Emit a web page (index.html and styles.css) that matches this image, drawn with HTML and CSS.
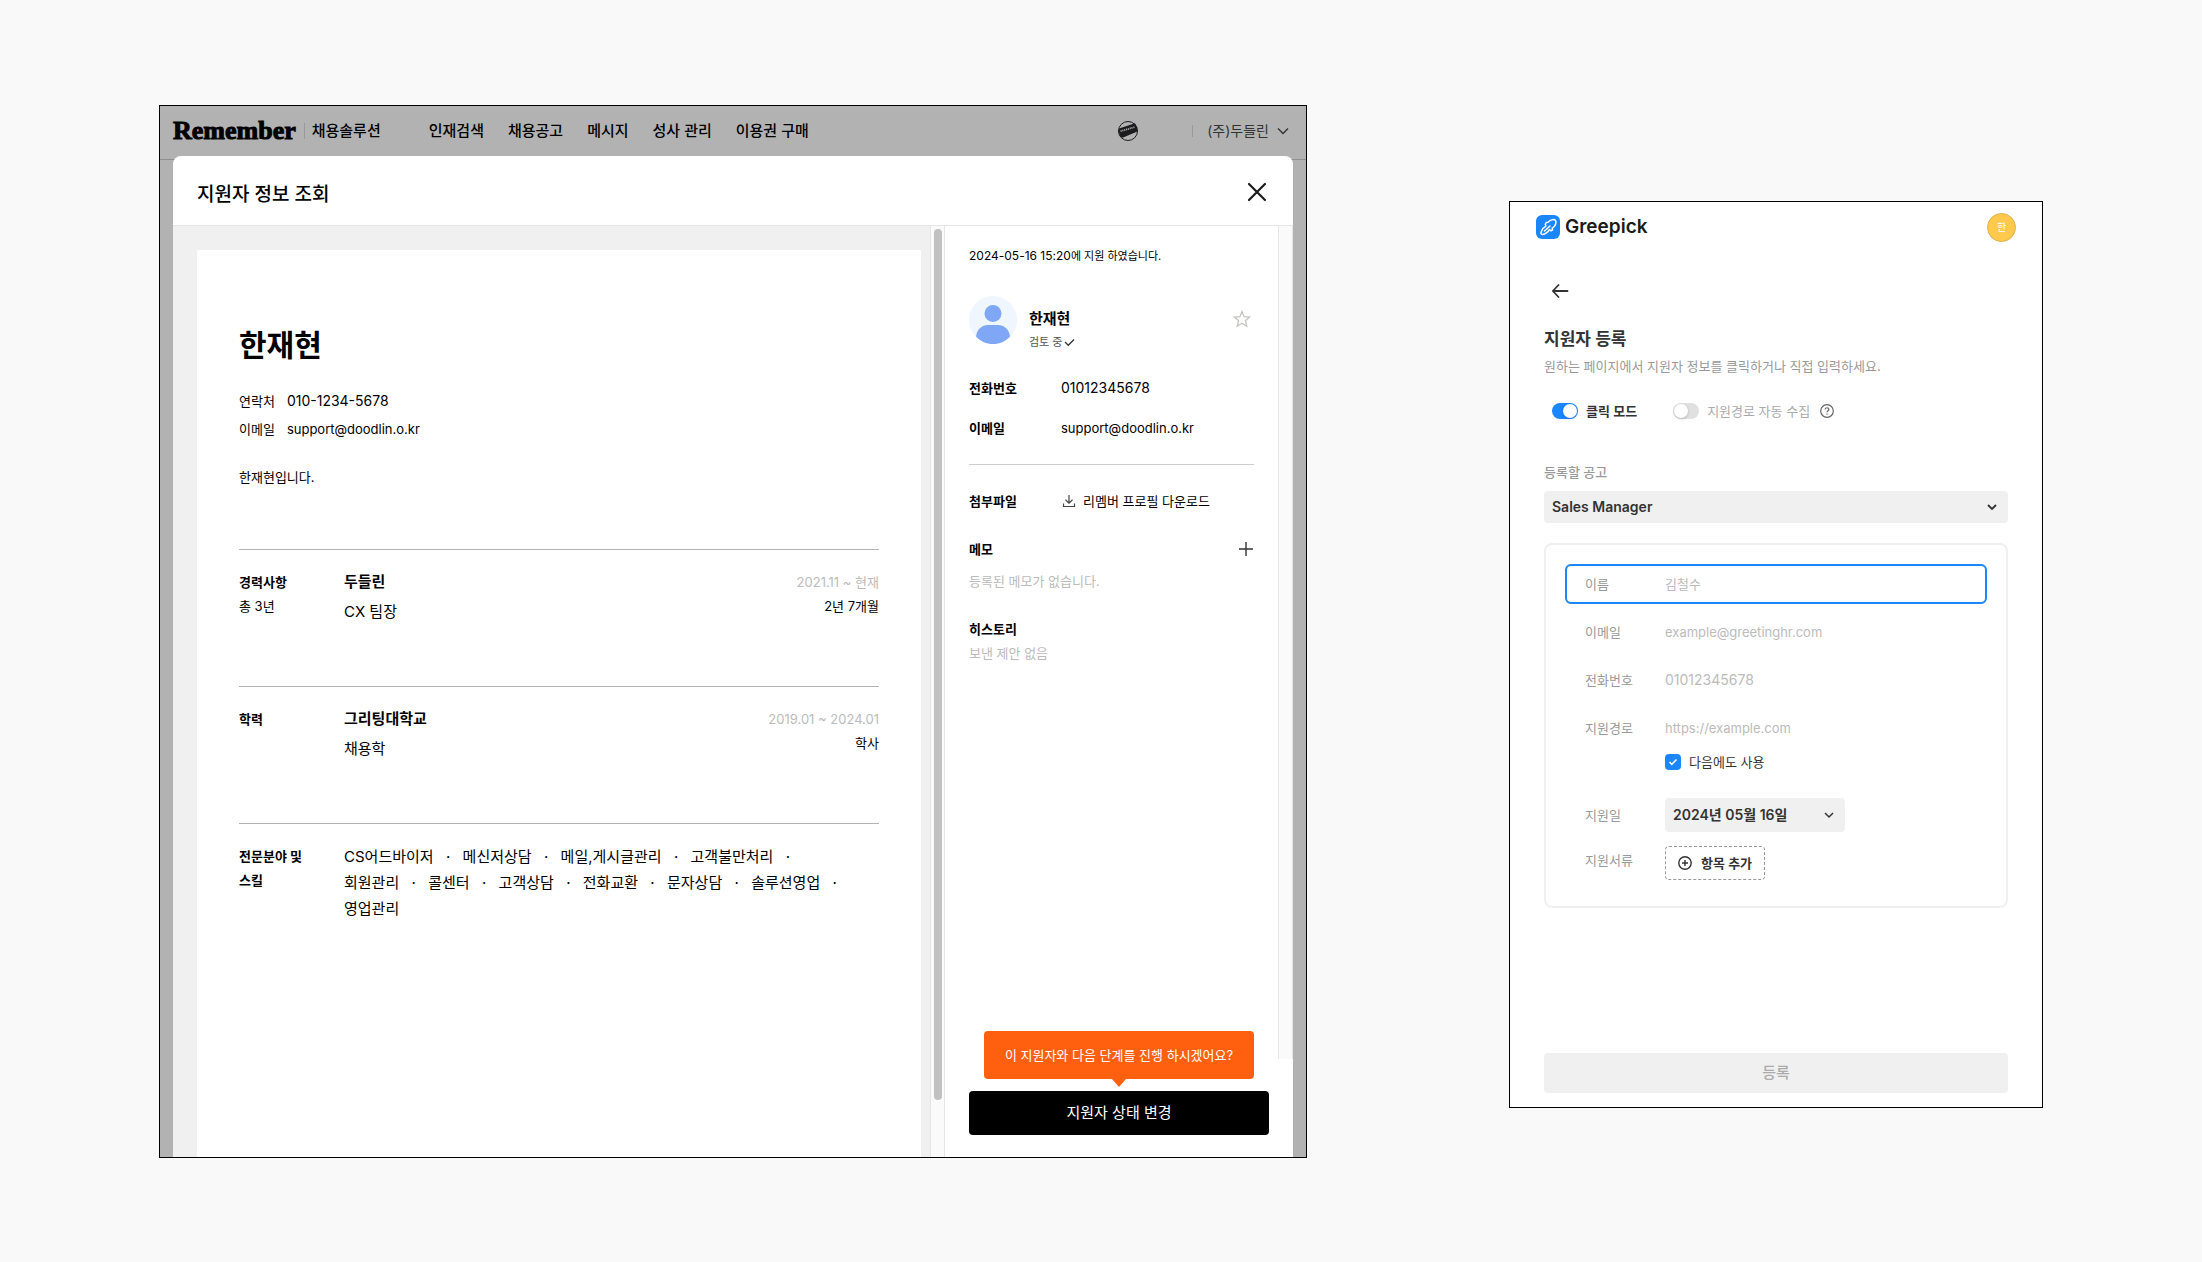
FILE: index.html
```html
<!DOCTYPE html>
<html lang="ko">
<head>
<meta charset="utf-8">
<title>지원자 정보 조회</title>
<link rel="stylesheet" href="styles.css">
</head>
<body>
<main class="stage">
  <section class="window browser">
    <header class="topbar">
      <a class="brand" href="#">Remember</a>
      <span class="brand-sub">채용솔루션</span>
      <nav class="nav">
        <a href="#">인재검색</a>
        <a href="#">채용공고</a>
        <a href="#">메시지</a>
        <a href="#">성사 관리</a>
        <a href="#">이용권 구매</a>
      </nav>
      <svg class="company-logo" width="20" height="20" viewBox="0 0 20 20" aria-hidden="true">
        <circle cx="10" cy="10" r="9.5" fill="none" stroke="#1c1c1e"/>
        <path d="M1 7.500 17 2.200 19 6 19.400 10.500 4.500 16.800 2 15.500 .8 11Z" fill="#1c1c1e"/>
        <path d="M2.500 10.200 17 6" stroke="#a0a0a0" stroke-width="1.800" stroke-dasharray="1.2 .7" fill="none"/>
      </svg>
      <button class="account" type="button">(주)두들린
        <svg width="12" height="8" viewBox="0 0 12 8" fill="none" stroke="#333" stroke-width="1.4" aria-hidden="true"><path d="m1 1.500 5 5 5-5"/></svg>
      </button>
    </header>

    <div class="modal" role="dialog" aria-labelledby="modal-title">
      <header class="modal-head">
        <h1 id="modal-title">지원자 정보 조회</h1>
        <button class="icon-btn" type="button" aria-label="닫기">
          <svg width="20" height="20" viewBox="0 0 20 20" fill="none" stroke="#1a1a1a" stroke-width="2.2" stroke-linecap="round"><path d="m2 2 16 16M18 2 2 18"/></svg>
        </button>
      </header>
      <div class="modal-body">
        <div class="paper-area">
          <article class="paper">
            <h2>한재현</h2>
            <dl class="contact">
              <dt>연락처</dt><dd class="phone">010-1234-5678</dd>
              <dt>이메일</dt><dd>support@doodlin.o.kr</dd>
            </dl>
            <p class="intro">한재현입니다.</p>
            <section class="entry">
              <div class="entry-label"><h3>경력사항</h3><p>총 3년</p></div>
              <div class="entry-main"><h4>두들린</h4><p>CX 팀장</p></div>
              <div class="entry-side"><p class="period">2021.11 ~ 현재</p><p>2년 7개월</p></div>
            </section>
            <section class="entry">
              <div class="entry-label"><h3>학력</h3></div>
              <div class="entry-main"><h4>그리팅대학교</h4><p>채용학</p></div>
              <div class="entry-side"><p class="period">2019.01 ~ 2024.01</p><p>학사</p></div>
            </section>
            <section class="entry">
              <div class="entry-label"><h3>전문분야 및 스킬</h3></div>
              <ul class="skills">
                <li>CS어드바이저</li><li>메신저상담</li><li>메일,게시글관리</li><li>고객불만처리</li><li>회원관리</li><li>콜센터</li><li>고객상담</li><li>전화교환</li><li>문자상담</li><li>솔루션영업</li><li>영업관리</li>
              </ul>
            </section>
          </article>
        </div>
        <div class="scroll-track"><div class="scroll-thumb"></div></div>
        <aside class="side">
          <div class="side-scroll">
            <div class="side-content">
              <p class="applied"><time datetime="2024-05-16T15:20">2024-05-16 15:20</time>에 지원 하였습니다.</p>
              <div class="person">
                <svg width="48" height="48" viewBox="0 0 48 48" aria-hidden="true">
                  <circle cx="24" cy="24" r="24" fill="#f0f6fe"/>
                  <circle cx="24" cy="17.5" r="8.5" fill="#7fa7f5"/>
                  <path d="M7 40.5C8 33 13 29 19 29h10c6 0 11 4 12 11.5C36.500 45.500 30.500 48 24 48S11.500 45.500 7 40.500Z" fill="#7fa7f5"/>
                </svg>
                <div class="person-text">
                  <h3>한재현</h3>
                  <p>검토 중<svg width="11" height="9" viewBox="0 0 11 9" fill="none" stroke="#333" stroke-width="1.3" aria-hidden="true"><path d="m1 4 3.300 3.300L10 1.500"/></svg></p>
                </div>
                <button class="icon-btn star" type="button" aria-label="즐겨찾기">
                  <svg width="18" height="18" viewBox="0 0 18 18" fill="none" stroke="#c4c4bf" stroke-width="1.300"><path d="m9 1.600 2.100 5.100 5.500.4-4.200 3.600 1.300 5.500L9 13.300l-4.700 2.900 1.300-5.500-4.200-3.600 5.500-.4Z"/></svg>
                </button>
              </div>
              <dl class="fields">
                <dt>전화번호</dt><dd class="phone">01012345678</dd>
                <dt>이메일</dt><dd>support@doodlin.o.kr</dd>
              </dl>
              <dl class="fields files">
                <dt>첨부파일</dt>
                <dd><a class="download" href="#"><svg width="14" height="14" viewBox="0 0 14 14" fill="none" stroke="#444" stroke-width="1.200" aria-hidden="true"><path d="M7 1v8M3.500 5.800 7 9.200l3.500-3.400M1.500 9.500v3h11v-3"/></svg>리멤버 프로필 다운로드</a></dd>
              </dl>
              <div class="memo-head">
                <h3>메모</h3>
                <button class="icon-btn" type="button" aria-label="메모 추가"><svg width="16" height="16" viewBox="0 0 16 16" stroke="#333" stroke-width="1.400"><path d="M8 1v14M1 8h14"/></svg></button>
              </div>
              <p class="empty memo">등록된 메모가 없습니다.</p>
              <h3>히스토리</h3>
              <p class="empty">보낸 제안 없음</p>
            </div>
          </div>
          <footer class="side-foot">
            <p class="tip" role="status">이 지원자와 다음 단계를 진행 하시겠어요?</p>
            <button class="primary" type="button">지원자 상태 변경</button>
          </footer>
        </aside>
      </div>
    </div>
  </section>

  <section class="window greepick">
    <header class="gp-head">
      <svg width="24" height="24" viewBox="0 0 24 24" aria-hidden="true">
        <rect width="24" height="24" rx="6" fill="#1a86ff"/>
        <g fill="none" stroke="#fff" stroke-width="1.500" stroke-linejoin="round" stroke-linecap="round">
          <path d="M12 7.200C14 5 17.500 3.800 19.300 5.200c1.500 1.500.3 5.300-2.100 7.300l-1 .7.300 1.700-1.400.9-1.600-1.300c-1.200 2.500-4.500 4.800-7 4.900-1.600 0-1.800-1.200-1.300-2.700.7-2.300 2.700-4.600 4.700-5.600L9.300 9.200l1-1.700Z"/>
          <path d="M14 11 8.500 16"/>
        </g>
      </svg>
      <span class="gp-name">Greepick</span>
      <span class="gp-avatar">한</span>
    </header>
    <form class="gp-form">
      <button class="icon-btn back" type="button" aria-label="뒤로">
        <svg width="18" height="16" viewBox="0 0 18 16" fill="none" stroke="#333" stroke-width="1.800" stroke-linecap="round" stroke-linejoin="round"><path d="M16.500 8H2M7.500 2 1.800 8l5.700 6"/></svg>
      </button>
      <h2>지원자 등록</h2>
      <p class="lead">원하는 페이지에서 지원자 정보를 클릭하거나 직접 입력하세요.</p>
      <div class="toggles">
        <label class="toggle"><input type="checkbox" role="switch" checked>클릭 모드</label>
        <label class="toggle off"><input type="checkbox" role="switch">지원경로 자동 수집</label>
        <svg class="help" width="14" height="14" viewBox="0 0 14 14" fill="none" stroke="#666" stroke-width="1.200" aria-hidden="true"><circle cx="7" cy="7" r="6.300"/><path d="M5.200 5.500c0-2.300 3.600-2.300 3.600-.1C8.800 6.700 7 6.700 7 8.300M7 9.600v1.200"/></svg>
      </div>
      <label class="job-label" for="job">등록할 공고</label>
      <div class="select-box job">
        <select id="job"><option>Sales Manager</option></select>
        <svg width="10" height="7" viewBox="0 0 10 7" fill="none" stroke="#333" stroke-width="1.800" aria-hidden="true"><path d="m1 1 4 4 4-4"/></svg>
      </div>
      <div class="card">
        <div class="row focused"><label for="name">이름</label><input id="name" type="text" placeholder="김철수"></div>
        <div class="row"><label for="email">이메일</label><input id="email" type="email" placeholder="example@greetinghr.com"></div>
        <div class="row"><label for="phone">전화번호</label><input class="phone" id="phone" type="tel" placeholder="01012345678"></div>
        <div class="row"><label for="route">지원경로</label><input id="route" type="url" placeholder="https://example.com"></div>
        <label class="reuse"><span class="check"><input type="checkbox" checked><svg width="10" height="8" viewBox="0 0 10 8" fill="none" stroke="#fff" stroke-width="1.600" aria-hidden="true"><path d="m1.500 4 2.300 2.300L8.500 1.500"/></svg></span>다음에도 사용</label>
        <div class="row short date-row">
          <label for="date">지원일</label>
          <div class="select-box date">
            <select id="date"><option>2024년 05월 16일</option></select>
            <svg width="10" height="7" viewBox="0 0 10 7" fill="none" stroke="#333" stroke-width="1.500" aria-hidden="true"><path d="m1 1 4 4 4-4"/></svg>
          </div>
        </div>
        <div class="row short docs-row">
          <span class="row-label">지원서류</span>
          <button class="add" type="button"><svg width="14" height="14" viewBox="0 0 14 14" fill="none" stroke="#333" stroke-width="1.400" aria-hidden="true"><circle cx="7" cy="7" r="6.200"/><path d="M7 4v6M4 7h6"/></svg>항목 추가</button>
        </div>
      </div>
      <button class="submit" type="submit" disabled>등록</button>
    </form>
  </section>
</main>
</body>
</html>
```
FILE: styles.css
```css
*, *::before, *::after { box-sizing: border-box; }

body {
  margin: 0;
  background: #f9f9f9;
  color: #000;
  font: 13px/24px Inter, "Noto Sans CJK KR", sans-serif;
}

h1, h2, h3, h4, p, dl, dd, ul { margin: 0; padding: 0; }
h3, h4 { font-size: inherit; font-weight: 600; }
a { color: inherit; text-decoration: none; }
button, input, select { font: inherit; color: inherit; }
button { padding: 0; border: 0; background: none; cursor: pointer; }
svg { display: block; flex: none; }

.stage {
  display: grid;
  grid-template-columns: minmax(0, 1148fr) minmax(0, 534fr);
  gap: 202px;
  min-height: 100vh;
  padding: 105px 159px 104px;
}

.window {
  display: flex;
  flex-direction: column;
  border: 1px solid #000;
}

.icon-btn { display: grid; place-items: center; }

/* Remember window */
.browser { background: #b2b2b2; }

.topbar {
  display: flex;
  align-items: center;
  flex: none;
  height: 54px;
  padding: 0 17px 4px 13px;
  border-bottom: 1px solid #8f8f8f;
  font-size: 15px;
  font-weight: 500;
}

.brand {
  font: 700 26px/30px "Liberation Serif", serif;
  -webkit-text-stroke: 1px #000;
}

.brand-sub {
  margin-left: 8px;
  padding-left: 7px;
  border-left: 1px solid #999;
  line-height: 16px;
}

.nav {
  display: flex;
  gap: 24px;
  margin-left: 48px;
}

.company-logo { margin-left: auto; }

.account {
  display: flex;
  align-items: center;
  gap: 8px;
  margin-left: 54px;
  padding-left: 14px;
  border-left: 1px solid #999;
  color: #333;
  font-size: 14px;
  font-weight: 400;
  line-height: 12px;
}

/* The dialog overlaps the bottom edge of the top bar. */
.modal {
  display: flex;
  flex-direction: column;
  flex: 1;
  margin: -4px 13px 0;
  border-radius: 8px 8px 0 0;
  background: #fff;
  overflow: hidden;
}

.modal-head {
  display: flex;
  align-items: center;
  justify-content: space-between;
  height: 70px;
  padding: 2px 26px 0 24px;
  border-bottom: 1px solid #e5e5e5;
}

.modal-head h1 { padding-top: 6px; font-size: 19px; font-weight: 500; }

.modal-body { display: flex; flex: 1; }

.paper-area {
  display: flex;
  flex: 1;
  min-width: 0;
  padding: 24px 9px 0 24px;
  background: #f0f0f0;
}

.paper {
  flex: 1;
  padding: 75px 42px 0;
  background: #fff;
}

.paper h2 { font-size: 30px; font-weight: 700; line-height: 40px; }

.contact {
  display: grid;
  grid-template-columns: auto 1fr;
  column-gap: 12px;
  margin-top: 22px;
  line-height: 28px;
}

.phone { font-size: 14px; }

.intro { margin: 22px 0 60px; }

.entry {
  display: grid;
  grid-template-columns: 80px 1fr auto;
  align-items: start;
  min-height: 137px;
  padding-top: 20px;
  border-top: 1px solid #b2b2b2;
}

.entry-label { word-break: keep-all; }
.entry-main { display: grid; gap: 6px; padding-left: 25px; font-size: 15px; }
.entry-side { text-align: right; }
.period { color: #bbb; }

.skills {
  display: flex;
  flex-wrap: wrap;
  grid-column: 2 / -1;
  padding-left: 25px;
  font-size: 15px;
  line-height: 26px;
  list-style: none;
}

.skills li { display: flex; }
.skills li:not(:last-child)::after { content: "·"; width: 29px; text-align: center; }

.scroll-track {
  width: 15px;
  padding: 3px 2px 57px 3px;
  border: solid #e5e5e5;
  border-width: 0 1px;
  background: #fafafa;
}

.scroll-thumb { height: 100%; border-radius: 4px; background: #c1c1c1; }

.side { display: flex; flex-direction: column; width: 348px; }

.side-scroll { display: flex; flex: 1; }

.side-scroll::after {
  content: "";
  width: 15px;
  border: solid #e5e5e5;
  border-width: 0 1px;
  background: #fafafa;
}

.side-content { flex: 1; padding: 20px 24px; }
.applied { font-size: 11px; line-height: 20px; }
.applied time { font-size: 12px; }

.person { display: flex; align-items: flex-start; gap: 12px; margin-top: 30px; }
.person-text { flex: 1; padding-top: 11px; }
.person-text h3 { font-size: 15px; }
.person-text p { display: flex; align-items: center; gap: 2px; color: #555; font-size: 11px; line-height: 22px; }
.star { margin: 14px 3px 0 0; }

.fields {
  display: grid;
  grid-template-columns: 92px 1fr;
  row-gap: 16px;
  margin-top: 23px;
  padding-bottom: 24px;
  border-bottom: 1px solid #ccc;
}

.fields dt { font-weight: 600; }
.files { margin-top: 24px; border: 0; }
.download { display: flex; align-items: center; gap: 7px; padding-left: 1px; }

.memo-head { display: flex; justify-content: space-between; }
.empty { color: #bbb; }
.memo { margin: 8px 0 24px; }

.side-foot { position: relative; padding: 32px 24px 22px; }

.tip {
  position: absolute;
  right: 39px;
  bottom: 78px;
  width: 270px;
  border-radius: 4px;
  background: #ff6010;
  color: #fff;
  line-height: 48px;
  text-align: center;
}

.tip::after {
  content: "";
  position: absolute;
  top: 100%;
  left: 50%;
  margin-left: -7px;
  border: 7px solid transparent;
  border-top: 8px solid #ff6010;
  border-bottom: 0;
}

.primary {
  width: 100%;
  height: 44px;
  border-radius: 4px;
  background: #000;
  color: #fff;
  font-size: 15px;
}

/* Greepick window */
.greepick { margin: 96px 0 50px; background: #fff; color: #333; }

.gp-head { display: flex; align-items: center; height: 50px; padding: 0 26px; }
.gp-name { margin-left: 5px; color: #1a1a1a; font-size: 19px; font-weight: 600; }

.gp-avatar {
  width: 29px;
  height: 29px;
  margin-left: auto;
  border: 1px solid #dfb14a;
  border-radius: 50%;
  background: #ffc94d;
  color: #fff;
  font-size: 10px;
  line-height: 27px;
  text-align: center;
}

.gp-form {
  display: flex;
  flex-direction: column;
  flex: 1;
  padding: 27px 34px 14px;
}

.back { width: 24px; height: 24px; margin-left: 4px; }
.gp-form h2 { margin-top: 24px; font-size: 17px; font-weight: 600; line-height: 24px; }
.lead { margin-top: 4px; color: #999; line-height: 22px; }

.toggles { display: flex; align-items: center; margin: 24px 0 41px 8px; line-height: 20px; }
.toggle { display: flex; align-items: center; gap: 8px; font-weight: 600; }
.toggle.off { margin-left: 36px; color: #aaa; font-weight: 400; }
.help { margin-left: 10px; }

.toggle input {
  appearance: none;
  display: flex;
  width: 26px;
  height: 16px;
  margin: 0;
  padding: 1px;
  border-radius: 8px;
  background: #e0e0e0;
}

.toggle input::before {
  content: "";
  width: 14px;
  height: 14px;
  border-radius: 50%;
  background: #fff;
  box-shadow: 0 1px 3px #0003;
}

.toggle input:checked { justify-content: flex-end; background: #1a86ff; }

.job-label { color: #999; font-weight: 500; line-height: 20px; }

.select-box {
  display: grid;
  align-items: center;
  justify-items: end;
  border-radius: 4px;
  background: #f0f0f0;
  font-size: 14px;
}

.select-box > * { grid-area: 1 / 1; }

.select-box select {
  appearance: none;
  width: 100%;
  height: 100%;
  padding: 0 8px;
  border: 0;
  background: none;
  font-weight: 600;
}

.select-box svg { margin-right: 11px; pointer-events: none; }
.job { height: 32px; margin: 9px 0 20px; }
.date { width: 180px; height: 34px; }

.card { padding: 19px 19px 26px; border: 2px solid #f0f0f0; border-radius: 8px; }

.row {
  display: flex;
  align-items: center;
  height: 40px;
  padding-left: 18px;
  border: 2px solid transparent;
  border-radius: 6px;
}

.row + .row { margin-top: 8px; }
.row > label, .row-label { width: 80px; color: #999; }
.focused { border-color: #1a86ff; }

.row input { flex: 1; min-width: 0; padding: 0; border: 0; outline: 0; background: none; }
.row .phone { font-size: 14px; }
.row input::placeholder { color: #bbb; opacity: 1; }

.reuse {
  display: flex;
  align-items: center;
  gap: 8px;
  width: max-content;
  margin: 4px 0 26px 100px;
  line-height: 20px;
}

.check { display: grid; place-items: center; }
.check > * { grid-area: 1 / 1; }
.check input { appearance: none; width: 16px; height: 16px; margin: 0; border-radius: 4px; background: #1a86ff; }
.check svg { z-index: 1; }

.short { height: 34px; border-width: 0 2px; }
.row + .docs-row { margin-top: 14px; }
.row-label { align-self: flex-start; line-height: 28px; }

.add {
  display: flex;
  align-items: center;
  justify-content: center;
  gap: 9px;
  width: 100px;
  height: 34px;
  border: 1px dashed #999;
  border-radius: 4px;
  font-weight: 600;
}

.submit {
  height: 40px;
  margin-top: auto;
  border-radius: 4px;
  background: #f0f0f0;
  color: #aaa;
  font-size: 15px;
  font-weight: 500;
}
```
